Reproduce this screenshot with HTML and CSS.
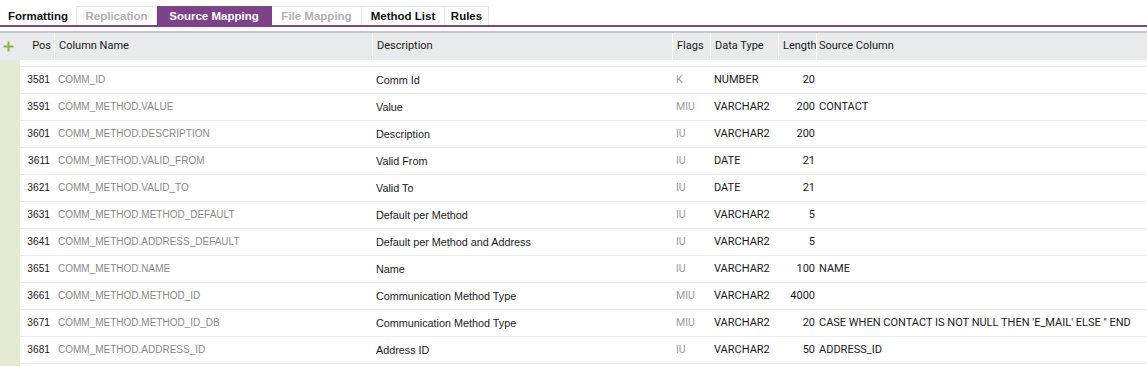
FILE: index.html
```html
<!DOCTYPE html>
<html>
<head>
    <meta charset="UTF-8">
    <title>Source Mapping</title>
    <link rel="stylesheet" href="styles.css">
</head>
<body>
<!-- tabs -->
<ul class="tabs">
    <li class="tab dark t1">Formatting</li>
    <li class="tab muted t2">Replication</li>
    <li class="tab active t3">Source Mapping</li>
    <li class="tab muted t4">File Mapping</li>
    <li class="tab dark t5">Method List</li>
    <li class="tab dark t6">Rules</li>
</ul>

<div class="head">
    <div class="add">
        <svg width="11" height="11" viewBox="0 0 11 11"><path d="M5.5 0.5v10M0.5 5.5h10" stroke="#8cb33f" stroke-width="2"/></svg>
    </div>
    <div class="h pos">Pos</div>
    <div class="h name">Column Name</div>
    <div class="h desc">Description</div>
    <div class="h flags">Flags</div>
    <div class="h type">Data Type</div>
    <div class="h len">Length</div>
    <div class="h src">Source Column</div>
</div>

<div class="grid">
    <div class="gutter"></div>
    <ul class="rows">
        <li class="row"><span class="pos">3581</span><span class="name">COMM_ID</span><span class="desc">Comm Id</span><span class="flags">K</span><span class="type">NUMBER</span><span class="len">20</span><span class="src"></span></li>
        <li class="row"><span class="pos">3591</span><span class="name">COMM_METHOD.VALUE</span><span class="desc">Value</span><span class="flags">MIU</span><span class="type">VARCHAR2</span><span class="len">200</span><span class="src">CONTACT</span></li>
        <li class="row"><span class="pos">3601</span><span class="name">COMM_METHOD.DESCRIPTION</span><span class="desc">Description</span><span class="flags">IU</span><span class="type">VARCHAR2</span><span class="len">200</span><span class="src"></span></li>
        <li class="row"><span class="pos">3611</span><span class="name">COMM_METHOD.VALID_FROM</span><span class="desc">Valid From</span><span class="flags">IU</span><span class="type">DATE</span><span class="len">21</span><span class="src"></span></li>
        <li class="row"><span class="pos">3621</span><span class="name">COMM_METHOD.VALID_TO</span><span class="desc">Valid To</span><span class="flags">IU</span><span class="type">DATE</span><span class="len">21</span><span class="src"></span></li>
        <li class="row"><span class="pos">3631</span><span class="name">COMM_METHOD.METHOD_DEFAULT</span><span class="desc">Default per Method</span><span class="flags">IU</span><span class="type">VARCHAR2</span><span class="len">5</span><span class="src"></span></li>
        <li class="row"><span class="pos">3641</span><span class="name">COMM_METHOD.ADDRESS_DEFAULT</span><span class="desc">Default per Method and Address</span><span class="flags">IU</span><span class="type">VARCHAR2</span><span class="len">5</span><span class="src"></span></li>
        <li class="row"><span class="pos">3651</span><span class="name">COMM_METHOD.NAME</span><span class="desc">Name</span><span class="flags">IU</span><span class="type">VARCHAR2</span><span class="len">100</span><span class="src">NAME</span></li>
        <li class="row"><span class="pos">3661</span><span class="name">COMM_METHOD.METHOD_ID</span><span class="desc">Communication Method Type</span><span class="flags">MIU</span><span class="type">VARCHAR2</span><span class="len">4000</span><span class="src"></span></li>
        <li class="row"><span class="pos">3671</span><span class="name">COMM_METHOD.METHOD_ID_DB</span><span class="desc">Communication Method Type</span><span class="flags">MIU</span><span class="type">VARCHAR2</span><span class="len">20</span><span class="src">CASE WHEN CONTACT IS NOT NULL THEN 'E_MAIL' ELSE '' END</span></li>
        <li class="row"><span class="pos">3681</span><span class="name">COMM_METHOD.ADDRESS_ID</span><span class="desc">Address ID</span><span class="flags">IU</span><span class="type">VARCHAR2</span><span class="len">50</span><span class="src">ADDRESS_ID</span></li>
    </ul>
</div>
</body>
</html>
```

FILE: styles.css
```css
body {
    margin: 0;
    padding-top: 6px;
    font-family: "Liberation Sans", Arial, sans-serif;
    font-size: 11px;
    color: #222;
    background: #fff;
    overflow: hidden;
}

ul {
    margin: 0;
    padding: 0;
    list-style: none;
}

/* tabs */
.tabs {
    display: flex;
    height: 19px;
    border-bottom: 2px solid #7d4389;
}

.tab {
    box-sizing: border-box;
    height: 19px;
    line-height: 18px;
    text-align: center;
    font-weight: bold;
    font-size: 11.5px;
    border-top: 1px solid #e6e6e6;
    border-right: 1px solid #e6e6e6;
}

.t1 { width: 77px; border-top-color: transparent; }
.t2 { width: 80px; }
.t3 { width: 115px; }
.t4 { width: 90px; }
.t5 { width: 83px; }
.t6 { width: 44px; }

.tab.dark { color: #111; }
.tab.muted { color: #b0b0b0; }

.tab.active {
    background: #7d4389;
    border-color: #7d4389;
    color: #fff;
}

/* header */
.head {
    display: flex;
    margin-top: 4px;
    height: 29px;
    box-sizing: border-box;
    border-top: 2px solid #c6c6c6;
    background: #e9eaeb;
    align-items: stretch;
    font-family: Roboto, "Liberation Sans", sans-serif;
}

.head > div {
    flex: none;
}

.head .h {
    line-height: 25px;
    box-sizing: border-box;
    border-left: 1px solid #fff;
    padding-left: 4px;
    font-size: 11px;
    color: #1a1a1a;
}

.add {
    width: 20px;
    display: flex;
    align-items: center;
    padding-left: 3px;
    box-sizing: border-box;
}

.head .pos {
    width: 34px;
    border-left: none;
    text-align: right;
    padding-right: 3px;
}

.head .name { width: 318px; }
.head .desc { width: 300px; }
.head .flags { width: 38px; }
.head .type { width: 68px; }
.head .len { width: 38px; }
.head .src { flex: 1; padding-left: 2px; }

/* rows */
.grid {
    display: flex;
}

.gutter {
    flex: none;
    width: 20px;
    background: #e3ebd2;
    height: 320px;
}

.rows {
    flex: 1;
    min-width: 0;
    padding-top: 6px;
}

.row {
    display: flex;
    height: 26px;
    line-height: 26px;
    border-top: 1px solid #ebebeb;
    white-space: nowrap;
}

.row > span {
    flex: none;
    box-sizing: border-box;
}

.row:last-child {
    border-bottom: 1px solid #ebebeb;
}

.row .pos {
    width: 30px;
    text-align: right;
    font-size: 10.2px;
    color: #1a1a1a;
}

.row .name {
    width: 326px;
    padding-left: 8px;
    font-size: 10px;
    color: #888;
}

.row .desc {
    width: 300px;
    font-size: 10.8px;
    color: #1a1a1a;
}

.row .flags {
    width: 38px;
    font-family: Roboto, "Liberation Sans", sans-serif;
    font-size: 10.5px;
    color: #9a9a9a;
}

.row .type {
    width: 65px;
    font-family: Roboto, "Liberation Sans", sans-serif;
    color: #1a1a1a;
}

.row .len {
    width: 37px;
    padding-right: 1px;
    text-align: right;
    font-family: Roboto, "Liberation Sans", sans-serif;
    color: #1a1a1a;
}

.row .src {
    flex: 1;
    padding-left: 3px;
    font-family: Roboto, "Liberation Sans", sans-serif;
    color: #1a1a1a;
}
```
